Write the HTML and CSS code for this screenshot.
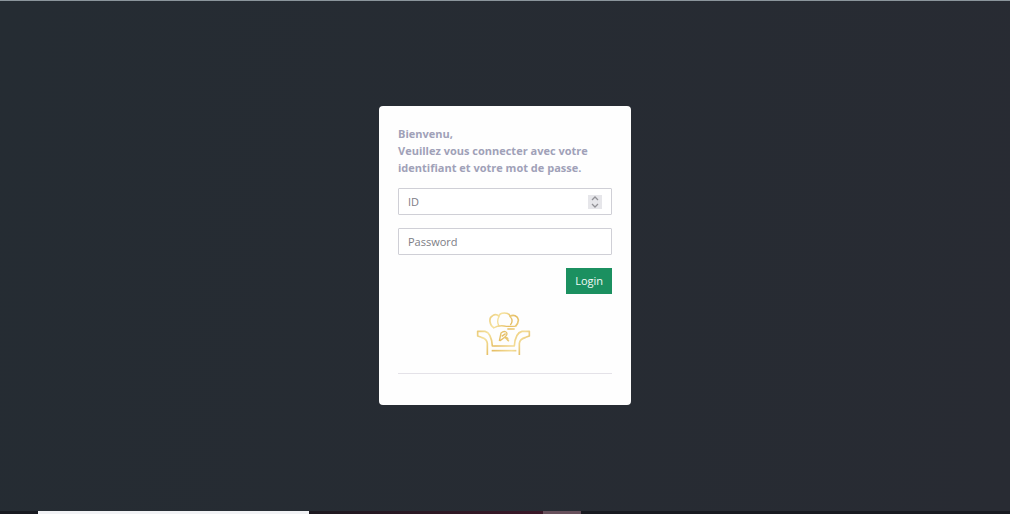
FILE: index.html
```
<!DOCTYPE html>
<html lang="fr">
<head>
  <meta charset="UTF-8">
  <meta name="viewport" content="width=device-width, initial-scale=1.0">
  <title>Login</title>
  <link rel="stylesheet" href="styles.css">
</head>
<body>
  <main class="page">
    <form class="card">
      <p class="welcome">Bienvenu,<br>Veuillez vous connecter avec votre identifiant et votre mot de passe.</p>

      <div class="field">
        <input type="number" id="login-id" placeholder="ID" aria-label="ID">
        <button type="button" class="spinner" aria-label="Modifier ID">
          <svg viewBox="0 0 14 14" width="14" height="14">
            <path d="M4 5l3-3 3 3M4 9l3 3 3-3" fill="none" stroke="#929297" stroke-width="1.3"/>
          </svg>
        </button>
      </div>

      <div class="field">
        <input type="password" id="password" placeholder="Password" aria-label="Password">
      </div>

      <button type="submit" class="btn-login">Login</button>

      <svg class="logo" viewBox="30 27 168 132" aria-hidden="true">
        <defs>
          <linearGradient id="gold" gradientUnits="userSpaceOnUse" x1="36" y1="40" x2="196" y2="150">
            <stop offset="0" stop-color="#e0b657"/>
            <stop offset="0.3" stop-color="#f6e3a0"/>
            <stop offset="0.5" stop-color="#e5bd62"/>
            <stop offset="0.75" stop-color="#f4dd98"/>
            <stop offset="1" stop-color="#daac4d"/>
          </linearGradient>
        </defs>
        <g fill="none" stroke="url(#gold)" stroke-width="5" stroke-linejoin="round">
          <!-- armchair -->
          <path d="M67 159V124C66 113 60 109 49 106L38 102V88H60C73 91 80 104 82 132H148C150 104 158 91 171 88H193V102L182 106C171 109 164 113 163 124V159"/>
          <path d="M80 146H154"/>
          <!-- crown -->
          <path d="M88 78C73 70 70 47 83 41C91 36 98 39 102 43C103 35 109 33 118 33C127 33 134 36 135 43C145 37 158 41 160 53C161 61 157 67 151 74"/>
          <path d="M102 43C97 53 97 65 103 73M135 43C143 52 142 62 136 69" stroke-width="4"/>
          <path d="M85 78C99 70 112 70 124 73H151M127 81H149" stroke-width="4"/>
          <!-- monogram -->
          <path d="M103 117L108 93C118 84 129 90 125 99C122 107 109 111 105 117M110 103L122 95M114 109C125 102 132 109 127 117M118 104L132 118" stroke-width="4"/>
        </g>
      </svg>

      <hr>
    </form>
  </main>

  <footer class="taskbar">
    <span class="search"></span>
    <span class="apps"></span>
    <span class="active"></span>
  </footer>
</body>
</html>
```
FILE: styles.css
```
* {
  box-sizing: border-box;
}

body {
  margin: 0;
  min-height: 100vh;
  display: flex;
  flex-direction: column;
  font-family: "Open Sans", sans-serif;
  font-size: 11px;
  background: linear-gradient(100deg, #252c33, #282b33);
  border-top: 1px solid #8b959c;
}

.page {
  flex: 1;
  display: flex;
  align-items: center;
  justify-content: center;
  padding-bottom: 2px;
}

.card {
  width: 252px;
  padding: 19px 19px 31px;
  display: flex;
  flex-direction: column;
  background: #fefefe;
  border-radius: 4px;
}

.welcome {
  margin: 0 0 12px;
  font-weight: 700;
  line-height: 17px;
  color: #a0a1b8;
}

.field {
  position: relative;
  margin-bottom: 13px;
}

.field input {
  display: block;
  width: 100%;
  height: 27px;
  padding: 0 9px;
  border: 1px solid #cfcfd6;
  border-radius: 1px;
  background: #fff;
  color: #555;
  font: inherit;
  appearance: textfield;
}

.field input::placeholder {
  color: #7d7d86;
}

.field input::-webkit-inner-spin-button {
  appearance: none;
}

.spinner {
  position: absolute;
  top: 7px;
  right: 10px;
  width: 14px;
  height: 14px;
  padding: 0;
  border: 0;
  background: #e6e6ea;
}

.spinner svg {
  display: block;
}

.btn-login {
  align-self: flex-end;
  height: 26px;
  padding: 0 9px;
  border: 0;
  background: #1b9060;
  color: #f2faf6;
  font: inherit;
}

.logo {
  align-self: center;
  width: 56px;
  height: 44px;
  margin: 17px 4px 18px 0;
}

hr {
  width: 100%;
  margin: 0;
  border: 0;
  border-top: 1px solid #e4e2e8;
}

.taskbar {
  height: 3px;
  display: flex;
  padding-left: 38px;
  background: #181a20;
}

.search {
  width: 271px;
  background: #f1f2f5;
}

.apps {
  width: 234px;
  background: linear-gradient(90deg, #1d1920, #3a1728);
}

.active {
  width: 38px;
  background: #67505b;
}
```
